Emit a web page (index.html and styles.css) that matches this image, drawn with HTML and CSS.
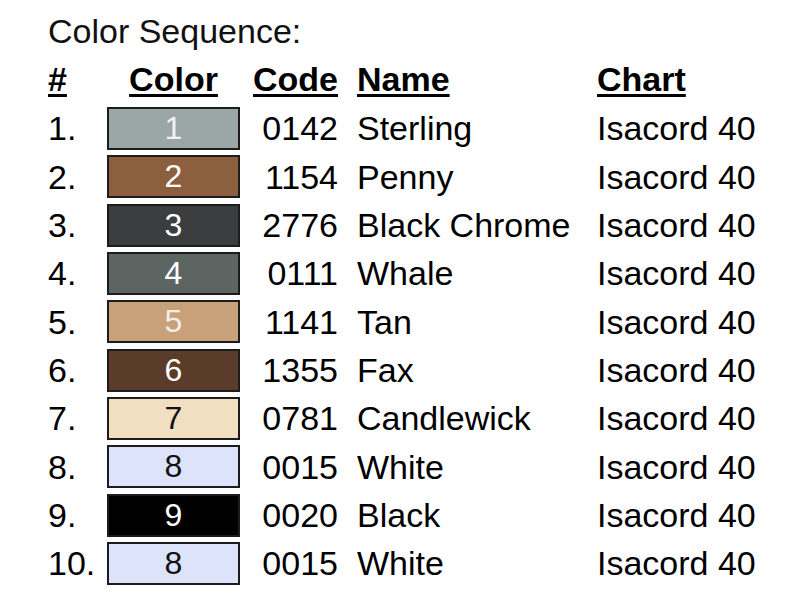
FILE: index.html
```html
<!DOCTYPE html>
<html>
<head>
<meta charset="utf-8">
<link rel="stylesheet" href="styles.css">
</head>
<body>
<div class="page">
  <div class="title">Color Sequence:</div>
  <div class="seq">
    <div class="hd num"><u>#</u></div>
    <div class="hd color"><u>Color</u></div>
    <div class="hd code"><u>Code</u></div>
    <div class="hd name"><u>Name</u></div>
    <div class="hd chart"><u>Chart</u></div>

    <div class="num">1.</div><div class="sw sw1">1</div><div class="code">0142</div><div class="name">Sterling</div><div class="chart">Isacord 40</div>
    <div class="num">2.</div><div class="sw sw2">2</div><div class="code">1154</div><div class="name">Penny</div><div class="chart">Isacord 40</div>
    <div class="num">3.</div><div class="sw sw3">3</div><div class="code">2776</div><div class="name">Black Chrome</div><div class="chart">Isacord 40</div>
    <div class="num">4.</div><div class="sw sw4">4</div><div class="code">0111</div><div class="name">Whale</div><div class="chart">Isacord 40</div>
    <div class="num">5.</div><div class="sw sw5">5</div><div class="code">1141</div><div class="name">Tan</div><div class="chart">Isacord 40</div>
    <div class="num">6.</div><div class="sw sw6">6</div><div class="code">1355</div><div class="name">Fax</div><div class="chart">Isacord 40</div>
    <div class="num">7.</div><div class="sw sw7">7</div><div class="code">0781</div><div class="name">Candlewick</div><div class="chart">Isacord 40</div>
    <div class="num">8.</div><div class="sw sw8">8</div><div class="code">0015</div><div class="name">White</div><div class="chart">Isacord 40</div>
    <div class="num">9.</div><div class="sw sw9">9</div><div class="code">0020</div><div class="name">Black</div><div class="chart">Isacord 40</div>
    <div class="num">10.</div><div class="sw sw8">8</div><div class="code">0015</div><div class="name">White</div><div class="chart">Isacord 40</div>
  </div>
</div>
</body>
</html>
```
FILE: styles.css
```css
html, body {
  margin: 0;
  padding: 0;
  background: #ffffff;
}
body {
  font-family: "Liberation Sans", Arial, sans-serif;
  color: #000;
}
.page {
  padding: 11px 0 0 48px;
}
.title {
  font-size: 34px;
  line-height: 40px;
  height: 40px;
  color: #111;
}
.seq {
  margin-top: 8px;
  display: grid;
  grid-template-columns: 59px 133px 117px 240px auto;
  grid-template-rows: 45.3px repeat(10, 48.33px);
  align-items: center;
  font-size: 34px;
  line-height: 40px;
}
.hd {
  align-self: start;
  font-weight: bold;
  height: 40px;
}
.hd u {
  text-decoration-thickness: 3px;
  text-underline-offset: 3px;
}
.color {
  text-align: center;
}
.code {
  text-align: right;
  padding-right: 19px;
}
.sw {
  height: 43px;
  box-sizing: border-box;
  border: 2px solid #1c1c1c;
  text-align: center;
  font-size: 32px;
  line-height: 38px;
  color: #fff;
}
.sw1 { background: #9ba6a6; color: #eef2f2; }
.sw2 { background: #8c5f3e; }
.sw3 { background: #3b3d3f; }
.sw4 { background: #5d6563; }
.sw5 { background: #c8a07a; color: #f6efe6; }
.sw6 { background: #5b3b2a; }
.sw7 { background: #f2dfc2; color: #111; }
.sw8 { background: #dde3fb; color: #111; }
.sw9 { background: #000; }
```
